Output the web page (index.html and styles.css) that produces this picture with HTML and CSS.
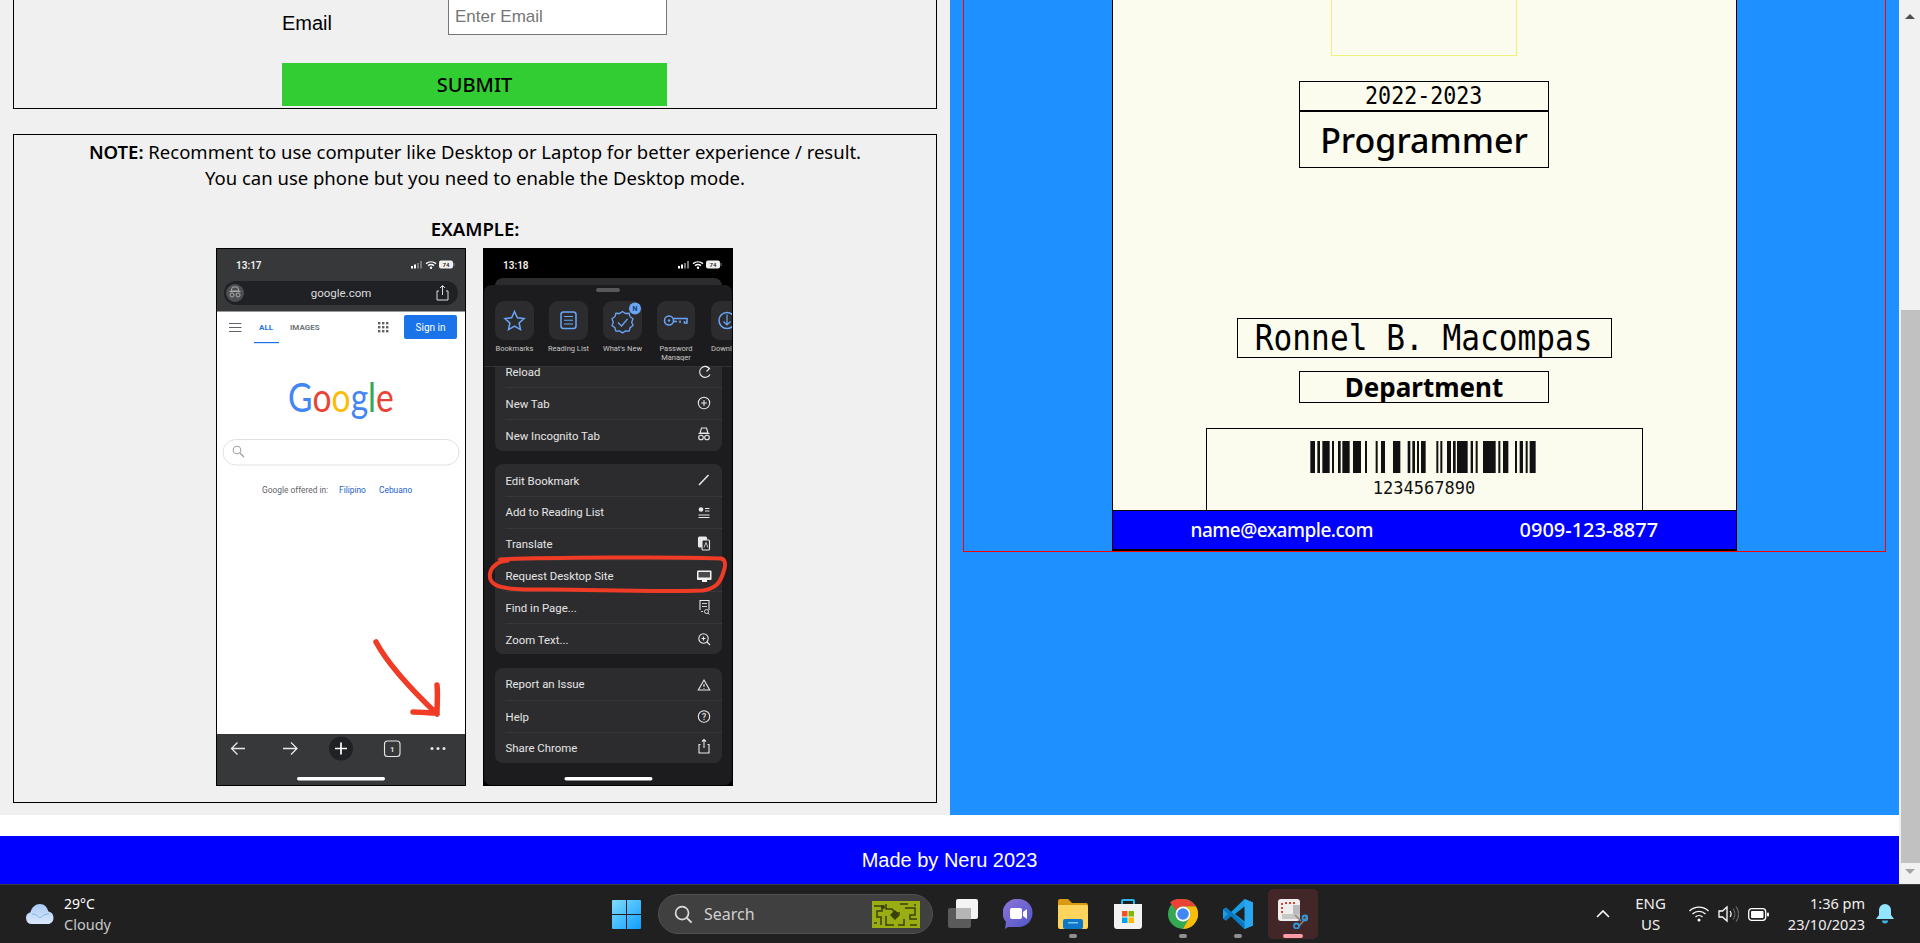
FILE: index.html
```html
<!DOCTYPE html>
<html lang="en">
<head>
<meta charset="utf-8">
<title>ID Card Generator</title>
<link rel="stylesheet" href="styles.css">
</head>
<body>
<div class="viewport">
  <div class="content">
    <main class="main">
      <section class="left">
        <form class="form-box">
          <div class="form-row">
            <label class="form-label" for="email">Email</label>
            <input class="form-input" id="email" type="text" placeholder="Enter Email">
          </div>
          <button class="submit" type="button">SUBMIT</button>
        </form>
        <div class="note-box">
          <p class="note-line"><b class="note-strong">NOTE:</b> Recomment to use computer like Desktop or Laptop for better experience / result.</p>
          <p class="note-line">You can use phone but you need to enable the Desktop mode.</p>
          <p class="note-line note-empty">&nbsp;</p>
          <p class="note-line"><b class="note-strong">EXAMPLE:</b></p>
          <div class="phones">
            <svg class="phone" viewBox="0 0 248 536" xmlns="http://www.w3.org/2000/svg">
              <defs>
                <g id="status">
                  <rect x="0" y="5" width="2" height="2.5" fill="#fff"/><rect x="3" y="3.5" width="2" height="4" fill="#fff"/><rect x="6" y="2" width="2" height="5.5" fill="#777"/><rect x="9" y="0" width="2" height="7.5" fill="#777"/>
                  <path d="M15 2.600a8 8 0 0 1 10 0M17 4.600a5 5 0 0 1 6 0" fill="none" stroke="#fff" stroke-width="1.400"/><circle cx="20" cy="6.700" r="1.200" fill="#fff"/>
                  <rect x="28" y="-.5" width="14" height="8" rx="2" fill="#f0f0f0"/><rect x="42.500" y="2" width="1" height="3" fill="#888"/>
                  <text class="t-batt" x="35" y="6">74</text>
                </g>
              </defs>
              <rect width="248" height="536" fill="#fff"/>
              <rect width="248" height="62" fill="#37383a"/>
              <rect y="62" width="248" height="1" fill="#999"/>
              <text class="t-time" x="19" y="20">13:17</text>
              <use href="#status" x="194" y="12"/>
              <rect x="7" y="32" width="234" height="24" rx="12" fill="#202124"/>
              <circle cx="18" cy="44" r="9" fill="#4c4f52"/>
              <g fill="none" stroke="#aaa" stroke-width="1"><path d="M14 42l1.500-4h5l1.500 4zM12.500 42.500h11"/><circle cx="15" cy="46" r="2"/><circle cx="21" cy="46" r="2"/></g>
              <text class="t-url" x="124" y="48">google.com</text>
              <path d="M222 42h-2v9h11v-9h-2M225.500 46v-9M223 39l2.500-2.500 2.500 2.500" fill="none" stroke="#ddd" stroke-width="1"/>
              <path d="M12 74.500h12.500M12 78.500h12.500M12 82.500h12.500" stroke="#5f6368" stroke-width="1.200"/>
              <text class="t-all" x="42" y="81">ALL</text>
              <rect x="37" y="93" width="25" height="1.200" fill="#1a73e8"/>
              <text class="t-images" x="73" y="81">IMAGES</text>
              <g fill="#5f6368"><rect x="161" y="73" width="2.400" height="2.400"/><rect x="165" y="73" width="2.400" height="2.400"/><rect x="169" y="73" width="2.400" height="2.400"/><rect x="161" y="77" width="2.400" height="2.400"/><rect x="165" y="77" width="2.400" height="2.400"/><rect x="169" y="77" width="2.400" height="2.400"/><rect x="161" y="81" width="2.400" height="2.400"/><rect x="165" y="81" width="2.400" height="2.400"/><rect x="169" y="81" width="2.400" height="2.400"/></g>
              <rect x="187" y="66" width="53" height="24" rx="2" fill="#1a73e8"/>
              <text class="t-sign" x="213.500" y="81.500">Sign in</text>
              <text class="t-google" transform="translate(71 163) scale(.84 1)"><tspan fill="#4285f4">G</tspan><tspan fill="#ea4335">o</tspan><tspan fill="#fbbc05">o</tspan><tspan fill="#4285f4">g</tspan><tspan fill="#34a853">l</tspan><tspan fill="#ea4335">e</tspan></text>
              <rect x="6" y="190.500" width="236" height="25.500" rx="12.700" fill="#fff" stroke="#dfe1e5"/>
              <circle cx="20" cy="201" r="3.800" fill="none" stroke="#9aa0a6" stroke-width="1.100"/><path d="M23 204l4 4" stroke="#9aa0a6" stroke-width="1.300"/>
              <text class="t-off" x="45" y="244">Google offered in:</text>
              <text class="t-link" x="122" y="244">Filipino</text>
              <text class="t-link" x="162" y="244">Cebuano</text>
              <path d="M159 393c14 26 40 52 61 72M220 436c1 10 0 19 0 28-8 0-16-1-24-1" fill="none" stroke="#f03c26" stroke-width="5.500" stroke-linecap="round" stroke-linejoin="round"/>
              <rect y="485" width="248" height="51" fill="#37383a"/>
              <g fill="none" stroke="#e8e8e8" stroke-width="1.300"><path d="M28 499.500H15M20.500 493.500l-6 6 6 6"/><path d="M66 499.500h14M74 493.500l6 6-6 6"/></g>
              <circle cx="124" cy="499.500" r="12" fill="#202124"/>
              <path d="M124 493.500v12M118 499.500h12" stroke="#fff" stroke-width="1.700"/>
              <rect x="167.500" y="492" width="15.500" height="15.500" rx="3" fill="none" stroke="#e8e8e8" stroke-width="1.100"/>
              <text class="t-tab" x="175.200" y="502.500">1</text>
              <g fill="#e8e8e8"><circle cx="215" cy="499.500" r="1.500"/><circle cx="221" cy="499.500" r="1.500"/><circle cx="227" cy="499.500" r="1.500"/></g>
              <rect x="80" y="528" width="88" height="3.400" rx="1.700" fill="#fff"/>
            </svg>
            <svg class="phone phone-dark" viewBox="0 0 248 536" xmlns="http://www.w3.org/2000/svg">
              <rect width="248" height="536" fill="#000"/>
              <text class="t-time" x="19" y="20">13:18</text>
              <use href="#status" x="194" y="12"/>
              <rect x="11" y="29" width="227" height="30" rx="8" fill="#2c2c2e"/>
              <rect y="36" width="248" height="500" rx="7" fill="#1c1c1e"/>
              <rect x="112" y="39" width="24" height="4" rx="2" fill="#58585c"/>
              <g fill="#2c2c2e"><rect x="11" y="52" width="39" height="39" rx="9"/><rect x="65" y="52" width="39" height="39" rx="9"/><rect x="119" y="52" width="39" height="39" rx="9"/><rect x="173" y="52" width="38" height="39" rx="9"/><rect x="227" y="52" width="38" height="39" rx="9"/></g>
              <g fill="none" stroke="#6aa5f7" stroke-width="1.500">
                <path d="M30.500 62.500l2.900 6.200 6.700.8-5 4.500 1.400 6.600-6-3.400-6 3.400 1.400-6.600-5-4.500 6.700-.8z"/>
                <rect x="77" y="63" width="15" height="16.500" rx="2.500"/><path d="M80 67.500h9M80 71.300h9M80 75h9" stroke-width="1.100"/>
                <path d="M138.500 62.500l3 2 3.600-.2 1 3.400 2.900 2.100-1.300 3.400 1.300 3.400-2.900 2.100-1 3.400-3.600-.2-3 2-3-2-3.600.2-1-3.400-2.900-2.100 1.300-3.400-1.300-3.400 2.900-2.100 1-3.400 3.600.2z" stroke-width="1.300"/><path d="M134 73.500l3.500 3.500 6-7" stroke-width="1.200"/>
                <circle cx="185" cy="71.500" r="4.500"/><circle cx="185" cy="71.500" r="1.200" fill="#6aa5f7" stroke="none"/><path d="M189.500 69.500H203v4.500h-2.500v-2M196 74v-2.500M189.500 72.500h3.500"/>
                <circle cx="243" cy="71.500" r="8"/><path d="M243 65.500v10M239.500 72.500l3.500 3.500 3.500-3.500" stroke-width="1.200"/>
              </g>
              <circle cx="151" cy="59.500" r="6" fill="#6aa5f7"/>
              <text class="t-n" x="151" y="62">N</text>
              <g class="tile-labels">
                <text class="t-tile" x="30.500" y="102">Bookmarks</text>
                <text class="t-tile" x="84.500" y="102">Reading List</text>
                <text class="t-tile" x="138.500" y="102">What's New</text>
                <text class="t-tile" x="192" y="102">Password</text>
                <text class="t-tile" x="192" y="110.500">Manager</text>
                <text class="t-tile t-tile-start" x="227" y="102">Downl</text>
              </g>
              <rect x="11" y="117" width="227" height="85" rx="8" fill="#2c2c2e"/>
              <rect x="11" y="112" width="227" height="6" fill="#1c1c1e"/>
              <rect y="117" width="248" height="1" fill="#333336"/>
              <rect x="11" y="118" width="227" height="7" fill="#2c2c2e"/>
              <rect x="11" y="215" width="227" height="190" rx="8" fill="#2c2c2e"/>
              <rect x="11" y="419" width="227" height="95" rx="8" fill="#2c2c2e"/>
              <g fill="#38383a"><rect x="21.500" y="138" width="216.500" height="1"/><rect x="21.500" y="170" width="216.500" height="1"/><rect x="21.500" y="247" width="216.500" height="1"/><rect x="21.500" y="279" width="216.500" height="1"/><rect x="21.500" y="310.500" width="216.500" height="1"/><rect x="21.500" y="342" width="216.500" height="1"/><rect x="21.500" y="374" width="216.500" height="1"/><rect x="21.500" y="451" width="216.500" height="1"/><rect x="21.500" y="483" width="216.500" height="1"/></g>
              <text class="t-menu" x="21.500" y="127">Reload</text>
              <text class="t-menu" x="21.500" y="158.500">New Tab</text>
              <text class="t-menu" x="21.500" y="190.500">New Incognito Tab</text>
              <text class="t-menu" x="21.500" y="235.500">Edit Bookmark</text>
              <text class="t-menu" x="21.500" y="267">Add to Reading List</text>
              <text class="t-menu" x="21.500" y="299">Translate</text>
              <text class="t-menu" x="21.500" y="330.500">Request Desktop Site</text>
              <text class="t-menu" x="21.500" y="362.500">Find in Page...</text>
              <text class="t-menu" x="21.500" y="394.500">Zoom Text...</text>
              <text class="t-menu" x="21.500" y="439">Report an Issue</text>
              <text class="t-menu" x="21.500" y="471.500">Help</text>
              <text class="t-menu" x="21.500" y="503">Share Chrome</text>
              <g fill="none" stroke="#e8e8e8" stroke-width="1.100">
                <path d="M225.500 119.500a5.500 5.500 0 1 0 .5 6"/><path d="M221.500 117l4 2.500-3 3"/>
                <circle cx="220" cy="154" r="5.700"/><path d="M220 151v6M217 154h6"/>
                <path d="M216 184l1.500-5h5l1.500 5zM214.500 184.500h11"/><circle cx="217" cy="188.500" r="2.300"/><circle cx="223" cy="188.500" r="2.300"/>
                <path d="M215 236l9.500-10" stroke-width="1.500"/>
                <path d="M221 259.500h4.500M221 262h4.500M214.500 266h11M214.500 268.500h11" stroke-width="1.200"/><circle cx="217" cy="260.500" r="2.300" fill="#e8e8e8" stroke="none"/>
                <rect x="214.500" y="288" width="8" height="10" rx="1" fill="#e8e8e8"/><rect x="218" y="291" width="7.500" height="10" rx="1" fill="#2c2c2e"/><path d="M220 298.500l2-5 2 5" stroke-width=".8"/>
                <path d="M216 361v-9.500h9v9.500"/><path d="M217 362.500h2M218 354.500h5M218 357.500h5" stroke-width=".9"/><circle cx="222.500" cy="362.500" r="2" stroke-width=".9"/><path d="M224 364l1.500 1.500" stroke-width=".9"/>
                <circle cx="219.500" cy="389.500" r="4.700"/><path d="M223 393l3 3M219.500 387.500v4M217.500 389.500h4"/>
                <path d="M220 431l5.700 10h-11.400zM220 435v3M220 439v.8"/>
                <circle cx="220" cy="467.500" r="5.700"/>
                <path d="M216.500 495.500h-1.500v8.500h10v-8.500h-1.500M220 499v-8.500M218 492.500l2-2 2 2"/>
              </g>
              <text class="t-q" x="220" y="470.500">?</text>
              <rect x="213" y="321.500" width="14.500" height="9.500" rx="1" fill="#f2f2f2"/><rect x="214.500" y="323" width="11.500" height="5.500" fill="#4a4a4c"/><rect x="218" y="331" width="5" height="2" fill="#f2f2f2"/>
              <path d="M16 310.500c30-2 190-3 221-1 6 1 4 10 2 15-3 9-7 15-20 17-50 2-110-1-152-1-20 0-46 1-56-5-8-5-6-15 1-20 3-3 8-3 12-4" fill="none" stroke="#f03c26" stroke-width="4" stroke-linecap="round"/>
              <rect x="80.500" y="528" width="88" height="3.400" rx="1.700" fill="#fff"/>
            </svg>
          </div>
        </div>
      </section>
      <section class="right">
        <div class="panel">
          <div class="card">
            <div class="photo"></div>
            <div class="year-box">
              <div class="year"><span class="mono-year">2022-2023</span></div>
              <div class="role">Programmer</div>
            </div>
            <div class="name"><span class="mono-name">Ronnel B. Macompas</span></div>
            <div class="dept">Department</div>
            <div class="barcode-box">
              <svg class="barcode" viewBox="0 0 750 96" xmlns="http://www.w3.org/2000/svg"><path d="M34 0h14v96H34zM55 0h8v96h-8zM70 0h22v96H70zM99 0h6v96h-6zM117 0h8v96h-8zM130 0h22v96h-22zM162 0h24v96h-24zM198 0h6v96h-6zM230 0h6v96h-6zM246 0h12v96h-12zM282 0h22v96h-22zM326 0h8v96h-8zM340 0h8v96h-8zM354 0h6v96h-6zM366 0h14v96h-14zM412 0h6v96h-6zM424 0h6v96h-6zM444 0h12v96h-12zM462 0h8v96h-8zM474 0h32v96h-32zM515 0h7v96h-7zM530 0h6v96h-6zM552 0h38v96h-38zM598 0h6v96h-6zM612 0h16v96h-16zM648 0h6v96h-6zM662 0h10v96h-10zM680 0h6v96h-6zM692 0h18v96h-18z" fill="#111"/></svg>
              <div class="barcode-num">1234567890</div>
            </div>
            <div class="contact">
              <span class="contact-mail">name@example.com</span>
              <span class="contact-phone">0909-123-8877</span>
            </div>
          </div>
        </div>
      </section>
    </main>
    <div class="gap"></div>
    <footer class="site-footer">Made by Neru 2023</footer>
  </div>
  <div class="scrollbar">
    <div class="sb-arrow sb-up"></div>
    <div class="sb-track"><div class="sb-thumb"></div></div>
    <div class="sb-arrow sb-down"></div>
  </div>
</div>
<div class="taskbar">
  <div class="weather">
    <svg class="weather-icon" viewBox="0 0 30 24" xmlns="http://www.w3.org/2000/svg"><defs><linearGradient id="cl" x1="0" y1="0" x2="0" y2="1"><stop offset="0" stop-color="#a9cbf5"/><stop offset="1" stop-color="#dbe9fb"/></linearGradient></defs><path d="M7 22a6 6 0 0 1-1.500-11.800C7 5 10.500 2 15 2c4.500 0 7 3 8.500 7.500A6.500 6.500 0 0 1 24 22z" fill="url(#cl)"/><path d="M7 12c4 0 6 2 8 4 2-2 5-4 9-4" fill="none" stroke="#8ab4ea" stroke-width="1"/></svg>
    <div class="weather-text"><div class="tb-main">29°C</div><div class="tb-sub">Cloudy</div></div>
  </div>
  <div class="center">
    <svg class="start" viewBox="0 0 29 29" xmlns="http://www.w3.org/2000/svg"><defs><linearGradient id="st" x1="0" y1="0" x2="1" y2="1"><stop offset="0" stop-color="#7fdcff"/><stop offset="1" stop-color="#0f9eff"/></linearGradient></defs><path d="M1 0h13v14H0V1a1 1 0 0 1 1-1zM15 0h13a1 1 0 0 1 1 1v13H15zM0 15h14v14H1a1 1 0 0 1-1-1zM15 15h14v13a1 1 0 0 1-1 1H15z" fill="url(#st)"/></svg>
    <div class="search">
      <svg class="search-icon" viewBox="0 0 20 20" xmlns="http://www.w3.org/2000/svg"><circle cx="8.500" cy="8.500" r="6.800" fill="none" stroke="#ddd" stroke-width="1.800"/><path d="M13.500 13.500l5 5" stroke="#ddd" stroke-width="2"/></svg>
      <span class="search-text">Search</span>
      <svg class="search-art" viewBox="0 0 48 27" xmlns="http://www.w3.org/2000/svg"><rect width="48" height="27" fill="#9aad12"/><path d="M2 5h8v5H5v6h4v8M14 3v5h6l3 4h5M28 3h8M33 7h10v7h-5v4h7M43 3v2M2 22h3M14 15v9h8M26 24h6v-6M38 24h7" fill="none" stroke="#39410a" stroke-width="1.500"/><path d="M23 9l5 5-5 5-5-5z" fill="#39410a"/><circle cx="11" cy="6" r="2" fill="#39410a"/></svg>
    </div>
    <div class="apps">
      <div class="app"><svg class="app-icon" viewBox="0 0 30 30" xmlns="http://www.w3.org/2000/svg"><rect x="0" y="9" width="23" height="20" rx="2" fill="#5a5a5a"/><rect x="8" y="0" width="22" height="20" rx="2" fill="#f4f4f4"/><rect x="8" y="9" width="15" height="11" fill="#b5b5b5"/></svg><span class="dot dot-none"></span></div>
      <div class="app"><svg class="app-icon" viewBox="0 0 30 30" xmlns="http://www.w3.org/2000/svg"><defs><linearGradient id="me" x1="0" y1="0" x2="1" y2="1"><stop offset="0" stop-color="#8f75d8"/><stop offset="1" stop-color="#4d55c8"/></linearGradient></defs><path d="M15.500 0a14 14 0 0 1 0 28H5l-3 2 1-7A14 14 0 0 1 15.500 0z" fill="url(#me)"/><rect x="7" y="9" width="12" height="11" rx="2" fill="#fff"/><path d="M20 13l4-3v10l-4-3z" fill="#fff"/></svg><span class="dot dot-none"></span></div>
      <div class="app"><svg class="app-icon" viewBox="0 0 30 30" xmlns="http://www.w3.org/2000/svg"><path d="M0 2a2 2 0 0 1 2-2h8l4 4h14a2 2 0 0 1 2 2v4H0z" fill="#d99a12"/><path d="M0 6h28a2 2 0 0 1 2 2v20a2 2 0 0 1-2 2H2a2 2 0 0 1-2-2z" fill="#ffd45c"/><rect x="5" y="20" width="20" height="10" rx="2" fill="#1076c8"/><rect x="10" y="23" width="10" height="1.500" fill="#7cc6f5"/></svg><span class="dot"></span></div>
      <div class="app"><svg class="app-icon" viewBox="0 0 30 30" xmlns="http://www.w3.org/2000/svg"><path d="M9 6V2a1 1 0 0 1 1-1h10a1 1 0 0 1 1 1v4" fill="none" stroke="#2eb7ef" stroke-width="2"/><path d="M1 5h28v22a3 3 0 0 1-3 3H4a3 3 0 0 1-3-3z" fill="#f2f2f2"/><rect x="9" y="12" width="5.500" height="5.500" fill="#f25022"/><rect x="15.500" y="12" width="5.500" height="5.500" fill="#7fba00"/><rect x="9" y="18.500" width="5.500" height="5.500" fill="#00a4ef"/><rect x="15.500" y="18.500" width="5.500" height="5.500" fill="#ffb900"/></svg><span class="dot dot-none"></span></div>
      <div class="app"><svg class="app-icon" viewBox="0 0 30 30" xmlns="http://www.w3.org/2000/svg"><circle cx="15" cy="15" r="15" fill="#34a853"/><path d="M15 0a15 15 0 0 1 13 7.500H15a7.500 7.500 0 0 0-6.500 3.750L2 3.500A15 15 0 0 1 15 0z" fill="#ea4335"/><path d="M28 7.500A15 15 0 0 1 15 30l6.500-11.250A7.500 7.500 0 0 0 15 7.500z" fill="#fbbc05"/><circle cx="15" cy="15" r="7.500" fill="#fff"/><circle cx="15" cy="15" r="5.800" fill="#4285f4"/></svg><span class="dot"></span></div>
      <div class="app"><svg class="app-icon" viewBox="0 0 30 30" xmlns="http://www.w3.org/2000/svg"><path d="M21.500 0L30 3.500v23L21.500 30 8 17l-5 4.500L0 19.500v-9L3 8.500 8 13z" fill="#1b9de2"/><path d="M21.500 0L30 3.500v23L21.500 30z" fill="#28a7ee"/><path d="M21.500 7.500L12 15l9.500 7.500z" fill="#202020"/><path d="M0 10.500L3 8.500 21.500 24v6L8 17 3 21.500 0 19.500l5-4.500z" fill="#0a78c2"/></svg><span class="dot"></span></div>
      <div class="app app-active"><svg class="app-icon" viewBox="0 0 30 30" xmlns="http://www.w3.org/2000/svg"><rect x="0" y="0" width="22" height="22" rx="3" fill="#eee"/><path d="M3 4h2v2H3zM7 3h2v2H7zM11 3h2v2h-2zM15 3h2v2h-2zM3 8h2v2H3zM3 12h2v2H3z" fill="#d8432d"/><rect x="15" y="6" width="7" height="14" fill="#bbb"/><rect x="4" y="15" width="18" height="5" fill="#c8c8c8"/><path d="M17 16l6 6M29 18l-8 9" stroke="#888" stroke-width="1.500"/><g fill="none" stroke="#2b9be0" stroke-width="1.800"><circle cx="27" cy="19" r="2.500"/><circle cx="18.500" cy="27" r="2.500"/></g></svg><span class="dot dot-pink"></span></div>
    </div>
  </div>
  <div class="tray">
    <svg class="chevron" viewBox="0 0 14 8" xmlns="http://www.w3.org/2000/svg"><path d="M1 7l6-6 6 6" fill="none" stroke="#fff" stroke-width="1.600"/></svg>
    <div class="lang"><div>ENG</div><div>US</div></div>
    <svg class="wifi" viewBox="0 0 20 16" xmlns="http://www.w3.org/2000/svg"><g fill="none" stroke="#fff" stroke-width="1.300"><path d="M0.500 5a13.500 13.500 0 0 1 19 0"/><path d="M3.500 8a9.500 9.500 0 0 1 13 0"/><path d="M6.500 11a5 5 0 0 1 7 0"/></g><circle cx="10" cy="14" r="1.500" fill="#fff"/></svg>
    <svg class="volume" viewBox="0 0 21 18" xmlns="http://www.w3.org/2000/svg"><path d="M1 6h3.500L9 2v14l-4.500-4H1z" fill="none" stroke="#fff" stroke-width="1.300"/><path d="M12 6a5 5 0 0 1 0 6" fill="none" stroke="#fff" stroke-width="1.200"/><path d="M15 3.500a9 9 0 0 1 0 11M18 1.500a12 12 0 0 1 0 15" fill="none" stroke="#666" stroke-width="1.200"/></svg>
    <svg class="battery" viewBox="0 0 21 13" xmlns="http://www.w3.org/2000/svg"><rect x=".7" y=".7" width="17" height="11.600" rx="3" fill="none" stroke="#fff" stroke-width="1.300"/><rect x="3" y="3" width="12.500" height="7" rx="1" fill="#fff"/><rect x="19" y="4.500" width="2" height="4" rx="1" fill="#fff"/></svg>
    <div class="clock"><div>1:36 pm</div><div>23/10/2023</div></div>
    <svg class="bell" viewBox="0 0 18 20" xmlns="http://www.w3.org/2000/svg"><path d="M9 0a6 6 0 0 1 6 6v5l3 4H0l3-4V6a6 6 0 0 1 6-6z" fill="#92e4ff"/><path d="M6 16.500h6a3 3 0 0 1-6 0z" fill="#3cb7e6"/></svg>
  </div>
</div>
</body>
</html>
```

FILE: styles.css
```css
* { box-sizing: border-box; }
html, body { margin: 0; padding: 0; height: 943px; overflow: hidden; }
body { display: flex; flex-direction: column; font-family: "Liberation Sans", Arial, sans-serif; background: #fff; }

.viewport { display: flex; height: 884px; }
.content { flex: 1; display: flex; flex-direction: column; min-width: 0; }
.main { display: flex; height: 815px; }
.gap { height: 21px; background: #fff; }
.site-footer { height: 48px; background: #00f; color: #fff; display: flex; align-items: center; justify-content: center; font-size: 20px; }

.left { width: 950px; background: #f0f0f0; padding: 0 13px; }
.right { flex: 1; background: #1e90ff; padding: 0 13px; }

.form-box { height: 109px; border: 1px solid #000; border-top: 0; display: flex; flex-direction: column; justify-content: flex-end; overflow: hidden; padding: 0 269px 2px 268px; margin-bottom: 25px; }
.form-row { display: flex; align-items: flex-end; margin-bottom: 28px; flex: none; }
.form-label { width: 166px; font-size: 20px; line-height: 24px; color: #000; }
.form-input { width: 219px; height: 40px; flex: none; border: 1px solid #767676; background: #fff; padding: 3px 6px 0; font-family: "Liberation Sans", Arial, sans-serif; font-size: 17px; border-radius: 0; }
.form-input::placeholder { color: #757575; }
.submit { height: 43px; flex: none; width: 385px; background: #32cd32; border: 0; font-family: "Noto Sans", sans-serif; font-size: 20px; color: #000; font-weight: 500; padding: 0; }

.note-box { height: 669px; border: 1px solid #000; padding-top: 4px; text-align: center; font-family: "Noto Sans", sans-serif; font-size: 18.5px; color: #000; }
.note-line { margin: 0; line-height: 26px; }
.note-empty { line-height: 25px; }
.note-strong { font-weight: 600; }
.phones { display: flex; justify-content: center; gap: 17px; margin-top: 6px; padding-right: 2px; }
.phone { display: block; width: 250px; height: 538px; border: 1px solid #000; }
.phone-dark { border-color: #000; }

.t-time { font: 600 10px Roboto, sans-serif; fill: #f2f2f2; }
.t-batt { font: 700 6px Roboto, sans-serif; fill: #333; text-anchor: middle; }
.t-url { font: 400 11.5px Roboto, sans-serif; fill: #ddd; text-anchor: middle; }
.t-all { font: 700 8px Roboto, sans-serif; fill: #1a73e8; }
.t-images { font: 700 8px Roboto, sans-serif; fill: #70757a; }
.t-sign { font: 400 10px Roboto, sans-serif; fill: #fff; text-anchor: middle; }
.t-google { font: 400 40px Lato, sans-serif; }
.t-off { font: 400 8.4px Roboto, sans-serif; fill: #5f6368; }
.t-link { font: 400 8.4px Roboto, sans-serif; fill: #1a5fd0; }
.t-tab { font: 700 7px Roboto, sans-serif; fill: #e8e8e8; text-anchor: middle; }
.t-n { font: 700 7px Roboto, sans-serif; fill: #1c3f75; text-anchor: middle; }
.t-tile { font: 400 7.5px Roboto, sans-serif; fill: #c8c8c8; text-anchor: middle; }
.t-tile-start { text-anchor: start; }
.t-menu { font: 400 11.4px Roboto, sans-serif; fill: #e6e6e6; }
.t-q { font: 500 8.5px Roboto, sans-serif; fill: #e8e8e8; text-anchor: middle; }

.panel { height: 552px; border: 1px solid #f00; border-top: 0; display: flex; justify-content: center; }
.card { width: 625px; height: 551px; background: #fbfbee; border: solid #000; border-width: 0 1px; display: flex; flex-direction: column; align-items: center; margin-left: -1px; }
.photo { width: 186px; height: 56px; border: 1px solid #f0f080; border-top: 0; }
.year-box { margin-top: 25px; width: 250px; height: 88px; border: 1px solid #000; display: flex; flex-direction: column; }
.year { height: 30px; border-bottom: 2px solid #000; display: flex; align-items: center; justify-content: center; }
.mono-year { font-family: "DejaVu Sans Mono", monospace; font-size: 25px; display: inline-block; transform: scaleX(.866); line-height: 1; color: #000; }
.role { flex: 1; display: flex; align-items: center; justify-content: center; padding-top: 1px; font-family: "Noto Sans", sans-serif; font-size: 34px; font-weight: 500; color: #000; }
.name { margin-top: 150px; width: 375px; height: 40px; border: 1px solid #000; display: flex; align-items: center; justify-content: center; overflow: hidden; }
.mono-name { font-family: "DejaVu Sans Mono", monospace; font-size: 35px; display: inline-block; transform: scaleX(.89); white-space: nowrap; line-height: 1; }
.dept { margin-top: 13px; width: 250px; height: 32px; border: 1px solid #000; display: flex; align-items: center; justify-content: center; font-family: "Noto Sans", sans-serif; font-size: 26px; font-weight: 700; color: #000; }
.barcode-box { margin-top: 25px; width: 437px; height: 82px; border: solid #000; border-width: 1px 1px 0; display: flex; flex-direction: column; align-items: center; padding-top: 12px; flex: none; }
.barcode { display: block; width: 250px; height: 32px; flex: none; }
.barcode-num { font-family: "DejaVu Sans Mono", monospace; font-size: 17px; line-height: 20px; margin-top: 5px; color: #111; }
.contact { width: 623px; height: 41px; flex: none; background: #00f; border: solid #000; border-width: 1px 0 2px; display: flex; align-items: center; padding: 0 0 0 78px; color: #fff; font-family: "Noto Sans", sans-serif; font-size: 19px; font-weight: 500; }
.contact-mail { width: 329px; letter-spacing: -.5px; }
.contact-phone { font-size: 20px; }

.scrollbar { width: 21px; background: #f1f1f1; display: flex; flex-direction: column; align-items: center; }
.sb-arrow { flex: none; width: 21px; }
.sb-track { flex: 1; width: 100%; padding-top: 285px; display: flex; }
.sb-thumb { width: 18px; margin-left: 2px; background: #c1c1c1; flex: 1; }
.sb-up::after, .sb-down::after { content: ""; display: block; width: 0; height: 0; margin: 0 auto; border-left: 5px solid transparent; border-right: 5px solid transparent; }
.sb-up { height: 25px; padding-top: 14px; }
.sb-up::after { border-bottom: 5px solid #505050; }
.sb-down { height: 21px; padding-top: 6px; }
.sb-down::after { border-top: 5px solid #a3a3a3; }

.taskbar { height: 59px; background: #202020; border-top: 1px solid #3c3c3c; display: flex; align-items: center; color: #fff; font-family: "Noto Sans", sans-serif; }
.weather { width: 612px; display: flex; align-items: center; padding-left: 25px; gap: 9px; flex: none; }
.weather-icon { width: 30px; height: 24px; flex: none; }
.tb-main { font-size: 14px; line-height: 21px; color: #fff; }
.tb-sub { font-size: 14.5px; line-height: 21px; color: #c8c8c8; }
.center { display: flex; align-items: center; flex: none; }
.start { width: 29px; height: 29px; flex: none; margin-right: 17px; }
.search { width: 275px; height: 40px; border-radius: 20px; background: #404040; border: 1px solid #505050; display: flex; align-items: center; padding: 0 12px 0 15px; flex: none; }
.search-icon { width: 19px; height: 19px; flex: none; }
.search-text { font-size: 16px; color: #d0d0d0; margin-left: 11px; flex: 1; }
.search-art { width: 48px; height: 27px; flex: none; }
.apps { display: flex; gap: 5px; margin-left: 5px; }
.app { width: 50px; height: 50px; display: flex; flex-direction: column; align-items: center; padding-top: 10px; border-radius: 5px; }
.app-active { background: #432728; }
.app-icon { width: 30px; height: 30px; flex: none; }
.dot { width: 8px; height: 4px; border-radius: 2px; background: #8f8f8f; margin-top: 5px; flex: none; }
.dot-none { background: transparent; }
.dot-pink { width: 20px; background: #ff9aa8; }
.tray { margin-left: auto; display: flex; align-items: center; padding-right: 26px; }
.chevron { width: 14px; height: 8px; flex: none; }
.lang { width: 50px; margin-left: 15.600px; text-align: center; font-size: 15px; line-height: 21px; color: #f0f0f0; }
.wifi { width: 20px; height: 16px; margin-left: 13.400px; flex: none; }
.volume { width: 21px; height: 18px; margin-left: 9px; flex: none; }
.battery { width: 21px; height: 13px; margin-left: 9px; flex: none; }
.clock { width: 96px; text-align: right; font-size: 14.5px; line-height: 21px; color: #f0f0f0; }
.bell { width: 18px; height: 20px; margin-left: 11px; flex: none; }
```
